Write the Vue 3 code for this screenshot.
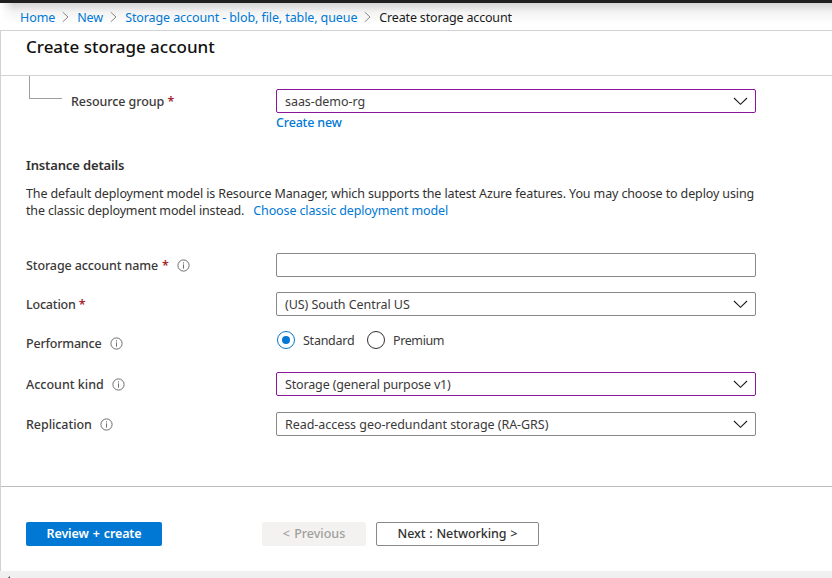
<script setup>
import { ref } from 'vue'

const crumbs = [
  { text: 'Home', cls: 'home' },
  { text: 'New', cls: 'new' },
  { text: 'Storage account - blob, file, table, queue', cls: 'offer' },
]
const performance = ref('Standard')
const tiers = ['Standard', 'Premium']
const rows = [
  { id: 'name', label: 'Storage account name', required: true, info: true, kind: 'input' },
  { id: 'location', label: 'Location', required: true, kind: 'select', value: '(US) South Central US' },
  { id: 'performance', label: 'Performance', info: true, kind: 'radio' },
  { id: 'kind', label: 'Account kind', info: true, kind: 'select', value: 'Storage (general purpose v1)', edited: true },
  { id: 'replication', label: 'Replication', info: true, kind: 'select', value: 'Read-access geo-redundant storage (RA-GRS)' },
]
</script>

<template>
  <div class="portal">
    <nav class="crumbs">
      <template v-for="c in crumbs" :key="c.text">
        <a :class="c.cls">{{ c.text }}</a>
        <svg class="sep" width="7" height="12" viewBox="0 0 7 12"><path d="M.8 1.2 6 6 .8 10.8" /></svg>
      </template>
      <span class="current">Create storage account</span>
    </nav>
    <main class="blade">
      <header><h1>Create storage account</h1></header>
      <section class="form">
        <div class="group-row">
          <div class="branch"></div>
          <label class="group-label"><span class="t-group">Resource group</span> <b class="req">*</b></label>
          <div class="field edited"><span class="v-group">saas-demo-rg</span>
            <svg class="chev" width="14" height="8" viewBox="0 0 14 8"><path d="M1 1 7.5 7.3 14 1" /></svg>
          </div>
        </div>
        <a class="create-new">Create new</a>
        <h2>Instance details</h2>
        <p class="desc">
          <span class="line1">The default deployment model is Resource Manager, which supports the latest Azure features. You may choose to deploy using</span><br>
          <span class="line2">the classic deployment model instead.</span><a class="classic">Choose classic deployment model</a>
        </p>
        <div v-for="r in rows" :key="r.id" class="row" :class="'row-' + r.id">
          <label>
            <span :class="'t-' + r.id">{{ r.label }}</span>
            <b v-if="r.required" class="req">*</b>
            <svg v-if="r.info" class="info" width="13" height="13" viewBox="0 0 13 13">
              <circle cx="6.5" cy="6.5" r="5.6" /><path d="M6.5 5.4V9.6M6.5 3.3v1.2" />
            </svg>
          </label>
          <input v-if="r.kind === 'input'" class="field" type="text">
          <div v-else-if="r.kind === 'select'" class="field" :class="{ edited: r.edited }">
            <span :class="'v-' + r.id">{{ r.value }}</span>
            <svg class="chev" width="14" height="8" viewBox="0 0 14 8"><path d="M1 1 7.5 7.3 14 1" /></svg>
          </div>
          <div v-else class="radios">
            <span v-for="t in tiers" :key="t" class="radio" :class="{ on: t === performance }" @click="performance = t">
              <i></i><span :class="'r-' + t">{{ t }}</span>
            </span>
          </div>
        </div>
      </section>
      <footer>
        <button class="primary"><span>Review + create</span></button>
        <button class="prev" disabled><span>&lt; Previous</span></button>
        <button class="next"><span>Next : Networking &gt;</span></button>
      </footer>
    </main>
    <div class="scrollbar"><svg width="3" height="3" viewBox="0 0 3 3"><path d="M0 3 3 0V3Z" /></svg></div>
  </div>
</template>

<style>
body { margin: 0; overflow: hidden; background: #fff; }
</style>
<style scoped>
.portal { width: 832px; height: 578px; display: flex; flex-direction: column; overflow: hidden; box-sizing: border-box; border-top: 3px solid #1f1f1f; font-family: "Noto Sans", "Open Sans", sans-serif; font-size: 12.5px; color: #3b3a39; white-space: nowrap; }
.portal * { box-sizing: border-box; }
a { color: #0078d4; }
.crumbs { flex: none; height: 27px; padding: 1px 0 0 20px; display: flex; align-items: center; background: linear-gradient(90deg, #fff, #fff0 14px), linear-gradient(#d4d4d4, #f3f3f3 9px, #fff 21px); color: #1b1a19; }
.sep { margin: 0 8px 0 7px; fill: none; stroke: #8a8886; stroke-width: 1; overflow: visible; }
.home { letter-spacing: -.1px; }
.new { letter-spacing: -.05px; }
.offer { letter-spacing: -.1px; }
.current { letter-spacing: -.17px; }
.blade { flex: none; height: 541px; border-left: 1px solid #d2d2d2; border-top: 1px solid #d2d2d2; display: flex; flex-direction: column; }
header { flex: none; height: 45px; border-bottom: 1px solid #d2d2d2; padding-left: 25px; }
h1 { margin: 0; font-size: 17px; line-height: 32px; font-weight: 500; color: #111; letter-spacing: -.01px; }
.form { height: 410px; padding-left: 25px; flex: none; display: flex; flex-direction: column; align-items: flex-start; }
.group-row { height: 37px; display: flex; align-items: flex-end; flex: none; }
.branch { width: 33px; height: 23px; margin-left: 3px; align-self: flex-start; border: solid #a19f9d; border-width: 0 0 1px 1px; }
.group-label { width: 214px; padding: 1px 0 0 9px; line-height: 24px; height: 24px; }
label { font-weight: 500; }
.t-group { letter-spacing: -.08px; }
.t-name { letter-spacing: -.12px; }
.t-location, .t-performance { letter-spacing: -.2px; }
.t-replication { letter-spacing: -.06px; }
.v-location, .v-group { letter-spacing: -.06px; }
.v-kind { letter-spacing: -.15px; }
.v-replication { letter-spacing: -.05px; }
.r-Standard { letter-spacing: -.25px; }
.r-Premium { letter-spacing: -.4px; }
.req { color: #a4262c; font-weight: 600; }
.field { width: 480px; height: 24px; border: 1px solid #8a8886; border-radius: 2px; padding: 0 8px; display: flex; align-items: center; justify-content: space-between; background: #fff; outline: none; }
.edited { border-color: #881798; }
.chev { fill: none; stroke: #1b1a19; stroke-width: 1.1; overflow: visible; }
.create-new { margin-left: 250px; line-height: 18px; height: 40px; font-weight: 500; padding-top: 1px; letter-spacing: -.17px; }
h2 { margin: 0; font-size: 13px; font-weight: 600; line-height: 24px; height: 32px; letter-spacing: -.14px; color: #323130; }
.desc { margin: 0; line-height: 17px; height: 68px; color: #323130; }
.line1 { letter-spacing: -.124px; }
.line2 { letter-spacing: -.15px; }
.classic { margin-left: 9px; letter-spacing: -.12px; }
.row { display: flex; width: 730px; height: 24px; flex: none; }
.row label { width: 250px; height: 24px; display: flex; align-items: center; gap: 4px; }
.row .info { margin: 1px 0 0 4.5px; }
.row-location label { gap: 3px; }
.info { fill: none; stroke: #605e5c; stroke-width: .9; }
.row-location { margin-top: 15px; }
.row-performance { margin-top: 15px; }
.row-kind { margin-top: 17px; }
.row-replication { margin-top: 16px; }
.radios { display: flex; gap: 12.6px; padding-left: 1px; height: 18px; }
.radio { display: flex; align-items: center; gap: 8px; }
.radio i { width: 18px; height: 18px; border: 1px solid #323130; border-radius: 50%; display: flex; align-items: center; justify-content: center; }
.on i { border-color: #0078d4; }
.on i::after { content: ""; width: 8px; height: 8px; border-radius: 50%; background: #0078d4; }
footer { border-top: 1px solid #bebbb8; flex: 1; display: flex; align-items: flex-start; padding: 35px 0 0 25px; }
button { font: 500 12.5px "Noto Sans", "Open Sans", sans-serif; height: 24px; border-radius: 2px; border: 0; padding: 0 0 2px; color: #323130; }
.primary { width: 136px; background: #0078d4; color: #fff; font-weight: 600; letter-spacing: -.15px; word-spacing: 1px; }
.prev { width: 104px; margin: 0 10px 0 100px; background: #f3f2f1; color: #a19f9d; word-spacing: 1px; }
.next { width: 163px; background: #fff; border: 1px solid #8a8886; letter-spacing: -.06px; word-spacing: .6px; }
.scrollbar { flex: 1; background: #f0f0f0; padding: 4px 0 0 7px; line-height: 0; }
.scrollbar path { fill: #404040; }
</style>
